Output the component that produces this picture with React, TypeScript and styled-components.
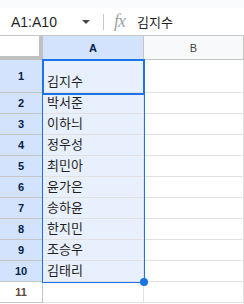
import React from 'react'
import styled, { createGlobalStyle } from 'styled-components'

const GlobalStyle = createGlobalStyle`
  html, body {
    margin: 0;
    padding: 0;
    background: #ffffff;
  }
  body {
    font-family: "Liberation Sans", Arial, "Noto Sans CJK KR", sans-serif;
    overflow: hidden;
  }
`;

const Page = styled.div`
  width: 244px;
  height: 304px;
  display: flex;
  flex-direction: column;
  background: #f9fbfd;
  padding-top: 8px;
  box-sizing: border-box;
`;

const FormulaBar = styled.div`
  height: 27px;
  display: flex;
  align-items: center;
  background: #ffffff;
  border-bottom: 1px solid #c7c7c7;
  color: #1f1f1f;
  font-size: 13px;
`;

const NameBox = styled.div`
  width: 100px;
  display: flex;
  align-items: center;
  justify-content: space-between;
  padding: 0 10px 0 11px;
  box-sizing: border-box;
  font-size: 14px;
`;

const Caret = styled.span`
  width: 0;
  height: 0;
  border-left: 4px solid transparent;
  border-right: 4px solid transparent;
  border-top: 4px solid #444746;
`;

const Divider = styled.span`
  width: 1px;
  height: 16px;
  background: #c7c7c7;
  margin: 0 10px 0 3px;
`;

const Fx = styled.span`
  font-family: "Liberation Serif", serif;
  font-style: italic;
  font-size: 18px;
  color: #a0a4a8;
  letter-spacing: -1px;
  margin-right: 12px;
`;

const FormulaText = styled.span`
  font-family: "Liberation Sans", "Noto Sans CJK KR", sans-serif;
  font-size: 13px;
  color: #1f1f1f;
`;

const Grid = styled.div`
  position: relative;
  flex: 1;
  display: grid;
  grid-template-columns: 43px 101px 1fr;
  grid-template-rows: 24px 33px repeat(10, 21px);
  background: #ffffff;
`;

const Corner = styled.div`
  background: #ffffff;
  border-right: 4px solid #c0c0c0;
  border-bottom: 4px solid #c0c0c0;
  box-sizing: border-box;
`;

const ColHeader = styled.div<{ $selected?: boolean }>`
  display: flex;
  align-items: center;
  justify-content: center;
  background: ${p => (p.$selected ? '#d3e3fd' : '#f8f9fa')};
  border-right: 1px solid #c4c7c5;
  border-bottom: 1px solid #c4c7c5;
  font-size: 11px;
  font-weight: ${p => (p.$selected ? 700 : 400)};
  color: ${p => (p.$selected ? '#041e49' : '#444746')};
  padding-top: 1px;
`;

const RowHeader = styled.div<{ $selected?: boolean }>`
  display: flex;
  align-items: center;
  justify-content: center;
  background: ${p => (p.$selected ? '#d3e3fd' : '#ffffff')};
  border-right: 1px solid #c4c7c5;
  border-bottom: 1px solid #c4c7c5;
  font-size: 11px;
  font-weight: 700;
  color: ${p => (p.$selected ? '#041e49' : '#5f4a3a')};
`;

const Cell = styled.div<{ $selected?: boolean }>`
  display: flex;
  align-items: flex-end;
  padding: 0 3px 1px 4px;
  background: ${p => (p.$selected ? '#e8f0fe' : '#ffffff')};
  border-right: 1px solid #e1e1e1;
  border-bottom: 1px solid #e1e1e1;
  font-family: "Liberation Sans", "Noto Sans CJK KR", sans-serif;
  font-size: 13px;
  color: #1f1f1f;
  line-height: 18px;
`;

const RangeBox = styled.div`
  position: absolute;
  left: 42px;
  top: 24px;
  width: 101px;
  height: 221px;
  border: 1px solid #1a73e8;
  pointer-events: none;
`;

const ActiveBox = styled.div`
  position: absolute;
  left: 42px;
  top: 23px;
  width: 99px;
  height: 32px;
  border: 2px solid #1a73e8;
  pointer-events: none;
`;

const FillHandle = styled.div`
  position: absolute;
  left: 140px;
  top: 242px;
  width: 8px;
  height: 8px;
  border-radius: 50%;
  background: #1a73e8;
`;

const names = ['김지수', '박서준', '이하늬', '정우성', '최민아', '윤가은', '송하윤', '한지민', '조승우', '김태리']

export default function App() {
  return (
    <>
      <GlobalStyle />
      <Page>
        <FormulaBar>
          <NameBox>
            <span>A1:A10</span>
            <Caret />
          </NameBox>
          <Divider />
          <Fx>fx</Fx>
          <FormulaText>김지수</FormulaText>
        </FormulaBar>
        <Grid>
          <Corner />
          <ColHeader $selected>A</ColHeader>
          <ColHeader>B</ColHeader>
          {names.map((n, i) => (
            <React.Fragment key={i}>
              <RowHeader $selected>{i + 1}</RowHeader>
              <Cell $selected>{n}</Cell>
              <Cell />
            </React.Fragment>
          ))}
          <RowHeader>11</RowHeader>
          <Cell />
          <Cell />
          <RangeBox />
          <ActiveBox />
          <FillHandle />
        </Grid>
      </Page>
    </>
  )
}
